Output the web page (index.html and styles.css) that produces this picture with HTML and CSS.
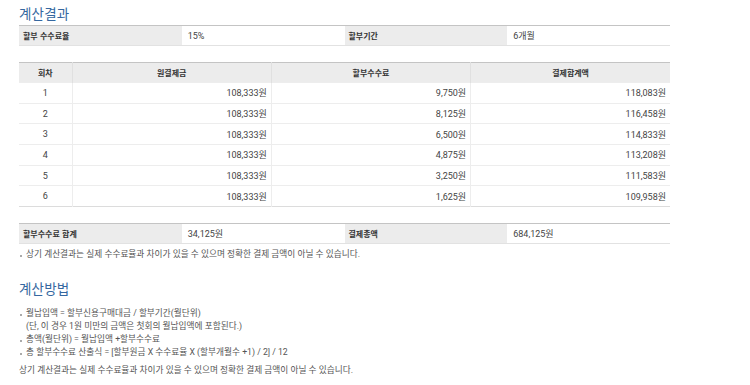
FILE: index.html
```html
<!DOCTYPE html>
<html lang="ko">
<head>
<meta charset="utf-8">
<link rel="stylesheet" href="styles.css">
</head>
<body>
<div class="wrap">
  <h2 class="title">계산결과</h2>
  <table class="info">
    <tr>
      <th>할부 수수료율</th><td>15%</td>
      <th>할부기간</th><td>6개월</td>
    </tr>
  </table>

  <table class="sched">
    <colgroup><col class="c1"><col><col><col></colgroup>
    <thead>
      <tr><th>회차</th><th>원결제금</th><th>할부수수료</th><th>결제합계액</th></tr>
    </thead>
    <tbody>
      <tr><td class="n">1</td><td>108,333원</td><td>9,750원</td><td>118,083원</td></tr>
      <tr><td class="n">2</td><td>108,333원</td><td>8,125원</td><td>116,458원</td></tr>
      <tr><td class="n">3</td><td>108,333원</td><td>6,500원</td><td>114,833원</td></tr>
      <tr><td class="n">4</td><td>108,333원</td><td>4,875원</td><td>113,208원</td></tr>
      <tr><td class="n">5</td><td>108,333원</td><td>3,250원</td><td>111,583원</td></tr>
      <tr><td class="n">6</td><td>108,333원</td><td>1,625원</td><td>109,958원</td></tr>
    </tbody>
  </table>

  <table class="info sum">
    <tr>
      <th>할부수수료 합계</th><td>34,125원</td>
      <th>결제총액</th><td>684,125원</td>
    </tr>
  </table>
  <p class="note">상기 계산결과는 실제 수수료율과 차이가 있을 수 있으며 정확한 결제 금액이 아닐 수 있습니다.</p>

  <h2 class="title title2">계산방법</h2>
  <ul class="method">
    <li>월납입액 = 할부신용구매대금 / 할부기간(월단위)<br>(단, 이 경우 1원 미만의 금액은 첫회의 월납입액에 포함된다.)</li>
    <li>총액(월단위) = 월납입액 +할부수수료</li>
    <li>총 할부수수료 산출식 = [할부원금 X 수수료율 X (할부개월수 +1) / 2] / 12</li>
  </ul>
  <p class="final">상기 계산결과는 실제 수수료율과 차이가 있을 수 있으며 정확한 결제 금액이 아닐 수 있습니다.</p>
</div>
</body>
</html>
```

FILE: styles.css
```css
* { box-sizing: border-box; }
html, body { margin: 0; padding: 0; background: #fff; }
body {
  font-family: Roboto, "Noto Sans CJK KR", sans-serif;
  font-size: 9px;
  color: #444;
}
.wrap { padding: 3px 0 0 19px; width: 670px; }
.title {
  margin: 0;
  font-family: "Noto Sans CJK KR", sans-serif;
  font-weight: 400;
  font-size: 13.5px;
  line-height: 20px;
  color: #3567a0;
  letter-spacing: 0.2px;
}
table { border-collapse: collapse; width: 651px; table-layout: fixed; }
.info { margin-top: 2px; border-top: 1px solid #c4c4c4; border-bottom: 1px solid #e2e2e2; }
.info th, .info td { height: 20px; padding: 0 4px; text-align: left; }
.info th {
  background: #ececec;
  font-family: "Noto Sans CJK KR", sans-serif;
  font-weight: 700;
  color: #333;
  font-size: 8px;
}
.info td { color: #444; padding-left: 6px; }

.sched { margin-top: 16px; border-top: 1px solid #c4c4c4; border-bottom: 1px solid #dcdcdc; }
.sched .c1 { width: 53px; }
.sched th {
  background: #ececec;
  height: 20px;
  font-family: "Noto Sans CJK KR", sans-serif;
  font-weight: 700;
  font-size: 8px;
  color: #333;
  border-left: 1px solid #e0e0e0;
}
.sched th:first-child { border-left: none; }
.sched td {
  height: 20.7px;
  text-align: right;
  padding: 0 4px;
  border-top: 1px solid #ededed;
  border-left: 1px solid #ededed;
  color: #444;
}
.sched td.n { text-align: center; border-left: none; }

.sum { margin-top: 16px; }
.note, .method li, .final { margin: 0; font-size: 8.7px; }
.note {
  margin-top: 3px;
  padding-left: 7px;
  position: relative;
  line-height: 14px;
  color: #555;
}
.note::before, .method li::before {
  content: "";
  position: absolute;
  left: 1px;
  top: 8px;
  width: 2px;
  height: 2px;
  background: #aaa;
}
.title2 { margin-top: 17px; }
.method { list-style: none; margin: 9px 0 0; padding: 0; }
.method li { position: relative; padding-left: 7px; line-height: 13px; color: #555; }
.method li::before { top: 7px; }
.final { margin-top: 4px; line-height: 14px; color: #555; }
```
